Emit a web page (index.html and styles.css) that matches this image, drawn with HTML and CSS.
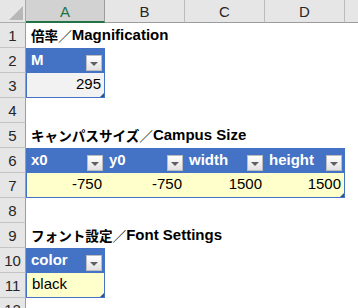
FILE: index.html
```html
<!DOCTYPE html>
<html lang="ja">
<head>
<meta charset="utf-8">
<link rel="stylesheet" href="styles.css">
</head>
<body>
<div class="sheet">
  <div class="corner"><span class="tri"></span></div>
  <div class="colh sel">A</div>
  <div class="colh">B</div>
  <div class="colh">C</div>
  <div class="colh">D</div>
  <div class="colh last"></div>

  <div class="rowh">1</div>
  <div class="cell title span4"><span class="jp">倍率／</span>Magnification</div>
  <div class="cell"></div>

  <div class="rowh">2</div>
  <div class="cell th tl tr"><span>M</span><i class="fb"></i></div>
  <div class="cell"></div><div class="cell"></div><div class="cell"></div><div class="cell"></div>

  <div class="rowh">3</div>
  <div class="cell td grey num tl tr bb end">295</div>
  <div class="cell"></div><div class="cell"></div><div class="cell"></div><div class="cell"></div>

  <div class="rowh">4</div>
  <div class="cell"></div><div class="cell"></div><div class="cell"></div><div class="cell"></div><div class="cell"></div>

  <div class="rowh">5</div>
  <div class="cell title span4"><span class="jp">キャンパスサイズ／</span>Campus Size</div>
  <div class="cell"></div>

  <div class="rowh">6</div>
  <div class="cell th tl"><span>x0</span><i class="fb"></i></div>
  <div class="cell th"><span>y0</span><i class="fb"></i></div>
  <div class="cell th"><span>width</span><i class="fb"></i></div>
  <div class="cell th tr"><span>height</span><i class="fb"></i></div>
  <div class="cell"></div>

  <div class="rowh">7</div>
  <div class="cell td yel num tl bb">-750</div>
  <div class="cell td yel num bb">-750</div>
  <div class="cell td yel num bb">1500</div>
  <div class="cell td yel num tr bb end">1500</div>
  <div class="cell"></div>

  <div class="rowh">8</div>
  <div class="cell"></div><div class="cell"></div><div class="cell"></div><div class="cell"></div><div class="cell"></div>

  <div class="rowh">9</div>
  <div class="cell title span4"><span class="jp">フォント設定／</span>Font Settings</div>
  <div class="cell"></div>

  <div class="rowh">10</div>
  <div class="cell th tl tr"><span>color</span><i class="fb"></i></div>
  <div class="cell"></div><div class="cell"></div><div class="cell"></div><div class="cell"></div>

  <div class="rowh">11</div>
  <div class="cell td yel tl tr bb end">black</div>
  <div class="cell"></div><div class="cell"></div><div class="cell"></div><div class="cell"></div>

  <div class="rowh cut">12</div>
  <div class="cell"></div><div class="cell"></div><div class="cell"></div><div class="cell"></div><div class="cell"></div>
</div>
</body>
</html>
```

FILE: styles.css
```css
html, body {
  margin: 0;
  padding: 0;
  background: #ffffff;
  overflow: hidden;
}
body {
  width: 358px;
  height: 308px;
  font-family: "Liberation Sans", "Noto Sans CJK JP", sans-serif;
  font-size: 15px;
  color: #000;
}
.sheet {
  display: grid;
  grid-template-columns: 26px 79px 80px 80px 80px 13px;
  grid-template-rows: 23px repeat(11, 25px) 25px;
}
.corner {
  background: #e6e6e6;
  border-right: 1px solid #ababab;
  border-bottom: 1px solid #ababab;
  box-sizing: border-box;
  display: flex;
  align-items: flex-end;
  justify-content: flex-end;
  padding: 0 2px 2px 0;
}
.corner .tri {
  width: 0;
  height: 0;
  border-left: 14px solid transparent;
  border-bottom: 14px solid #b7b7b7;
}
.colh {
  background: #e6e6e6;
  border-right: 1px solid #bcbcbc;
  border-bottom: 1px solid #9c9c9c;
  box-sizing: border-box;
  display: flex;
  align-items: center;
  justify-content: center;
  font-size: 15px;
  color: #262626;
  padding-top: 1px;
}
.colh.sel {
  background: #d2d2d2;
  color: #217346;
  border-bottom: 2px solid #217346;
  border-right-color: #9c9c9c;
}
.colh.last { border-right: none; }
.rowh {
  background: #e6e6e6;
  border-right: 1px solid #9c9c9c;
  border-bottom: 1px solid #c4c4c4;
  box-sizing: border-box;
  display: flex;
  align-items: center;
  justify-content: center;
  font-size: 15px;
  color: #262626;
  padding-top: 1px;
}
.rowh.cut {
  align-items: flex-start;
  padding-top: 3px;
}
.cell {
  box-sizing: border-box;
  display: flex;
  align-items: flex-end;
  padding: 0 3px 3px 5px;
  white-space: nowrap;
  line-height: 20px;
  position: relative;
}
.span4 { grid-column: span 4; }
.title {
  font-weight: bold;
}
.jp {
  font-family: "Noto Sans CJK JP", sans-serif;
  font-size: 13.6px;
}
.th {
  background: #4472c4;
  color: #fff;
  font-weight: bold;
  justify-content: space-between;
  align-items: stretch;
  padding: 0 2px 0 4px;
}
.th span {
  align-self: flex-end;
  padding-bottom: 3px;
}
.fb {
  align-self: flex-end;
  margin-bottom: 2px;
  width: 16px;
  height: 16px;
  box-sizing: border-box;
  border: 1px solid #bdbdbd;
  background: linear-gradient(#ffffff, #e2e2e2);
  display: flex;
  align-items: center;
  justify-content: center;
  padding-top: 2px;
}
.fb::after {
  content: "";
  width: 0;
  height: 0;
  border-left: 4px solid transparent;
  border-right: 4px solid transparent;
  border-top: 4px solid #5f5f5f;
}
.td { font-weight: normal; }
.grey { background: #f2f2f2; }
.yel { background: #ffffcc; }
.num { justify-content: flex-end; }
.tl { border-left: 1px solid #4472c4; }
.tr { border-right: 1px solid #4472c4; }
.bb { border-bottom: 1px solid #4472c4; }
.end::after {
  content: "";
  position: absolute;
  right: 0;
  bottom: 0;
  width: 0;
  height: 0;
  border-left: 4px solid transparent;
  border-bottom: 4px solid #2f5597;
}
```
